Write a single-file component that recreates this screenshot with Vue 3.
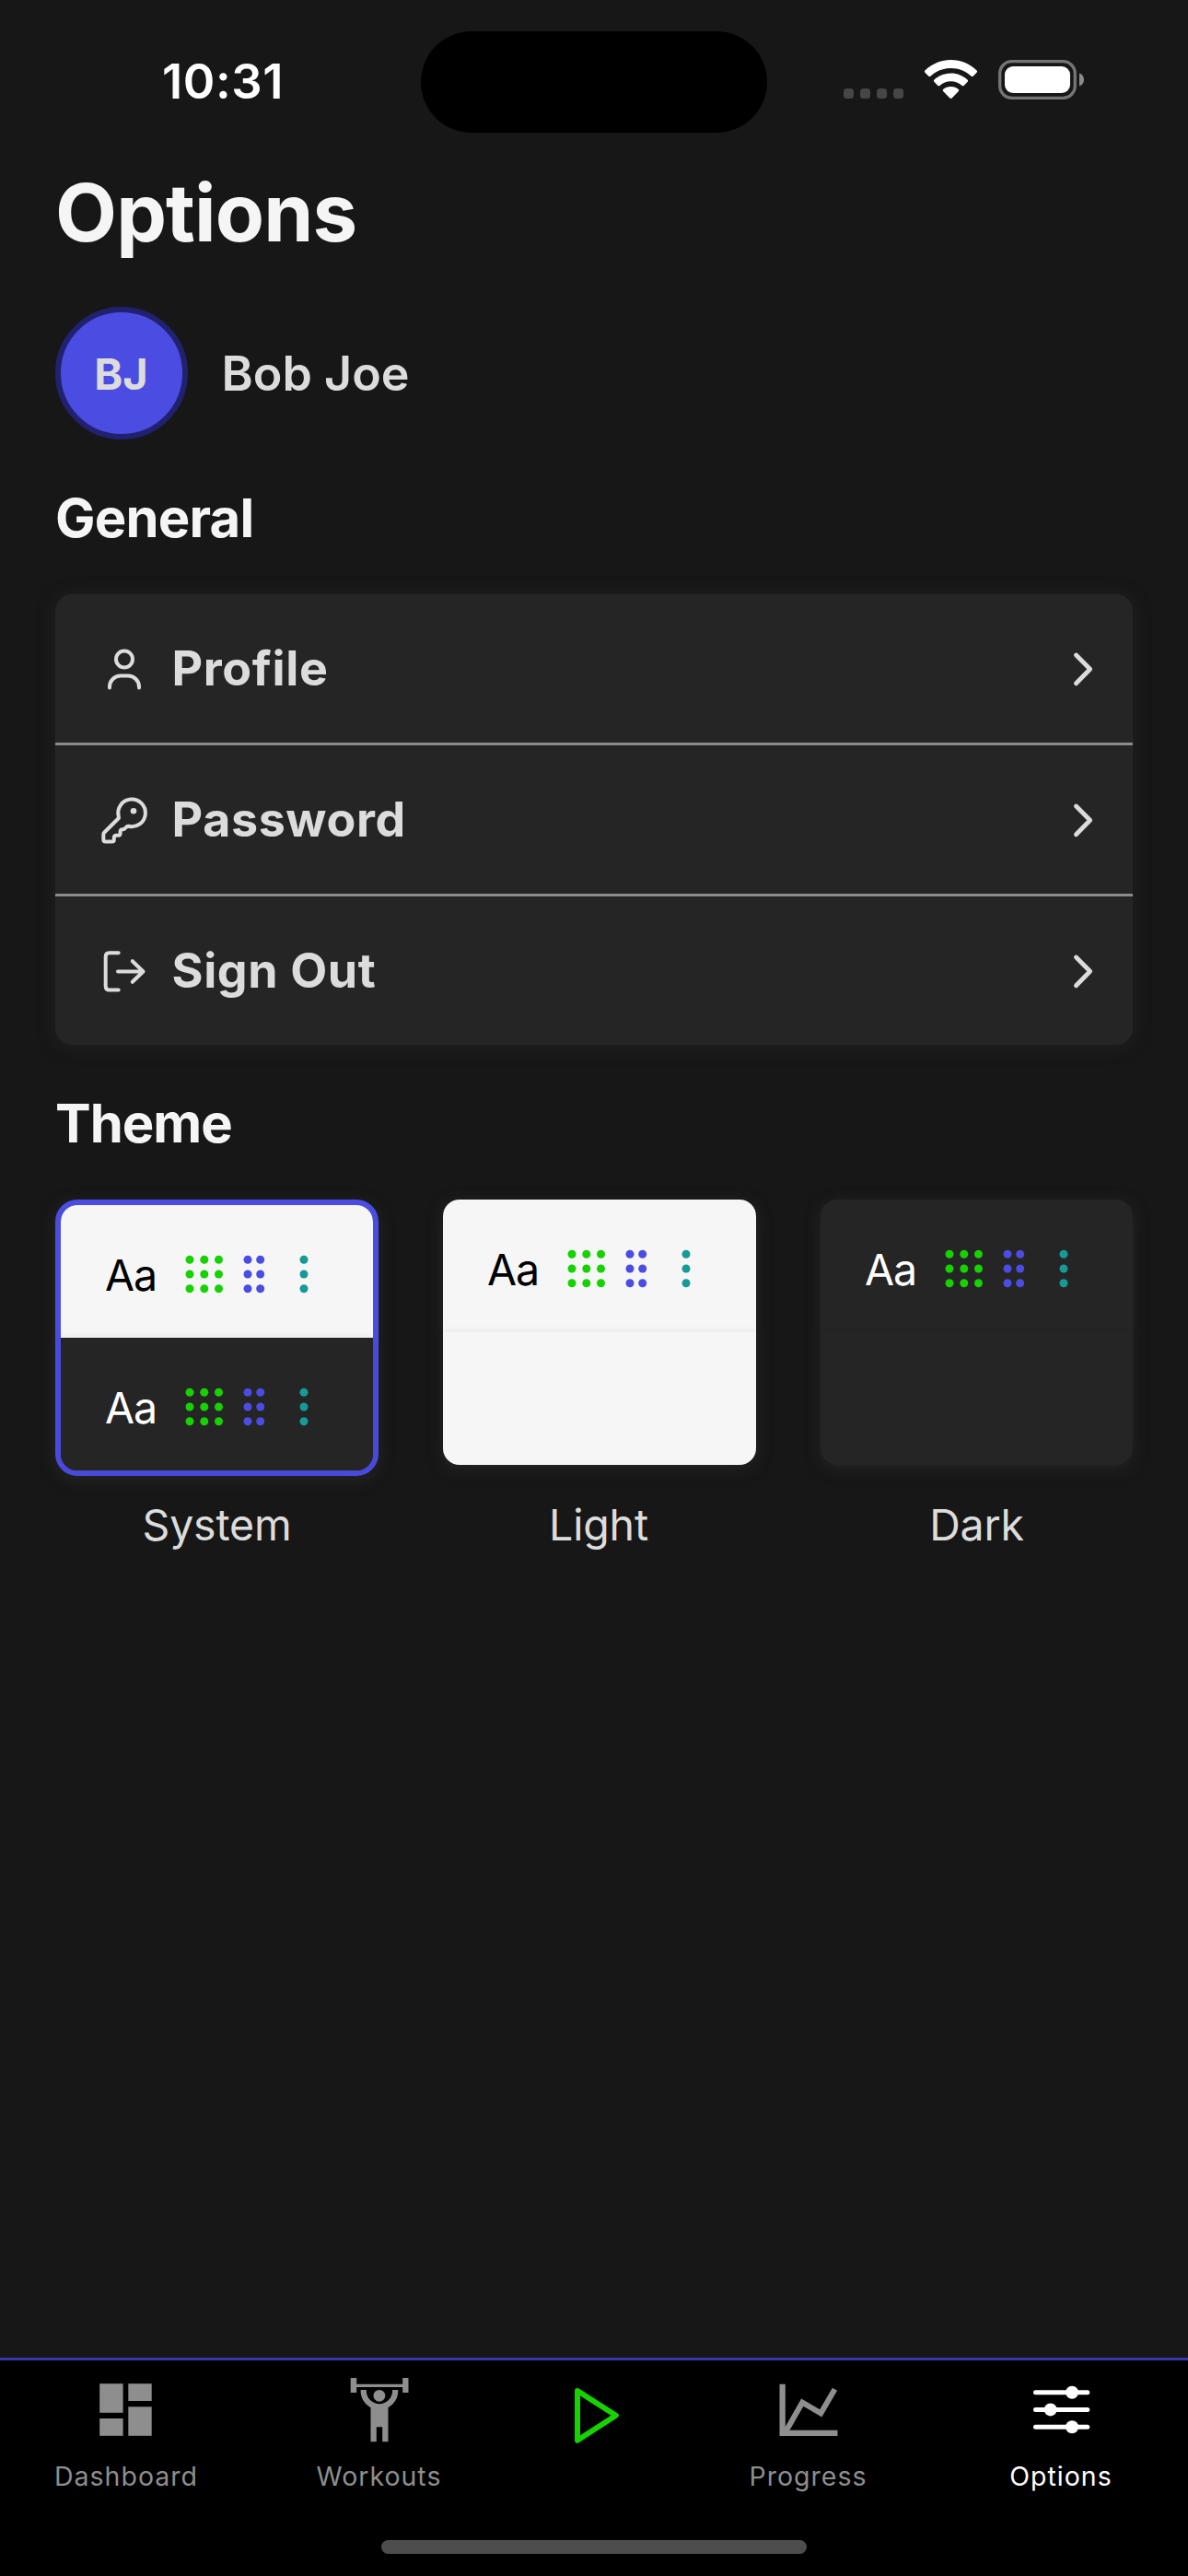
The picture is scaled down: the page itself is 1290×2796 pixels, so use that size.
<script setup>
const rows = [
  { id: 'profile', label: 'Profile' },
  { id: 'password', label: 'Password' },
  { id: 'signout', label: 'Sign Out' },
]

const themes = [
  { id: 'system', label: 'System', halves: [{ tone: 'light', sample: true }, { tone: 'dark', sample: true }] },
  { id: 'light', label: 'Light', halves: [{ tone: 'light', sample: true }, { tone: 'light', sample: false }] },
  { id: 'dark', label: 'Dark', halves: [{ tone: 'dark', sample: true }, { tone: 'dark', sample: false }] },
]

const dotRows = [5.2, 21, 36.7]
const dotCols = [
  { x: 6, tone: 'green' },
  { x: 21.8, tone: 'green' },
  { x: 37.5, tone: 'green' },
  { x: 69, tone: 'indigo' },
  { x: 82.7, tone: 'indigo' },
  { x: 130, tone: 'teal' },
]

const tabs = [
  { id: 'dashboard', label: 'Dashboard' },
  { id: 'workouts', label: 'Workouts' },
  { id: 'start', label: '' },
  { id: 'progress', label: 'Progress' },
  { id: 'options', label: 'Options' },
]
</script>

<template>
  <div class="screen">
    <header class="status">
      <div class="time">10:31</div>
      <div class="island"></div>
      <div class="indicators">
        <svg width="262" height="44" viewBox="0 0 262 44">
          <g fill="#464646">
            <rect x="0" y="32" width="11" height="11" rx="3.5" />
            <rect x="18" y="32" width="11" height="11" rx="3.5" />
            <rect x="36" y="32" width="11" height="11" rx="3.5" />
            <rect x="54" y="32" width="11" height="11" rx="3.5" />
          </g>
          <g fill="#fff">
            <path d="M116.500 1C127.500 1 137.500 5.400 144.600 12.500Q145.500 13.600 144.600 14.700L140.600 18.700Q139.600 19.500 138.600 18.700C132.800 13.200 125 9.900 116.500 9.900S100.200 13.200 94.400 18.700Q93.400 19.500 92.400 18.700L88.400 14.700Q87.500 13.600 88.400 12.500C95.500 5.400 105.500 1 116.500 1Z" />
            <path d="M116.500 15.600C123.500 15.600 129.900 18.300 134.700 22.700Q135.600 23.700 134.700 24.800L130.600 28.900Q129.600 29.800 128.600 28.900C125.400 26 121.200 24.300 116.500 24.300S107.600 26 104.400 28.900Q103.400 29.800 102.400 28.900L98.300 24.800Q97.400 23.700 98.300 22.700C103.100 18.300 109.500 15.600 116.500 15.600Z" />
            <path d="M116.500 30C119.700 30 122.700 31.200 124.900 33.100Q125.700 34.100 124.900 35.100L117.600 42.500Q116.500 43.400 115.400 42.500L108.100 35.100Q107.300 34.100 108.100 33.100C110.300 31.200 113.300 30 116.500 30Z" />
            <rect x="175" y="8" width="71" height="29" rx="9" />
          </g>
          <rect x="169.700" y="2.700" width="81.600" height="39.600" rx="13" fill="none" stroke="#757575" stroke-width="3.300" />
          <path d="M256 15.500C259 16.500 261 19 261 22.500S259 28.500 256 29.500Z" fill="#8b8b8b" />
        </svg>
      </div>
    </header>

    <main class="content">
      <h1>Options</h1>
      <div class="user">
        <div class="avatar"><span>BJ</span></div>
        <div class="name">Bob Joe</div>
      </div>

      <h2 class="general">General</h2>
      <div class="card">
        <div v-for="row in rows" :key="row.id" class="row">
          <svg class="row-icon" width="54" height="54" viewBox="0 0 54 54">
            <template v-if="row.id === 'profile'">
              <circle cx="27" cy="16.500" r="9" />
              <path d="M11 47.500V46.500A12 12 0 0 1 23 34.500H31A12 12 0 0 1 43 46.500V47.500" />
            </template>
            <template v-else-if="row.id === 'password'">
              <path d="M20.900 25L5.300 40.500Q4.300 41.500 4.300 43V48Q4.300 50.500 6.800 50.500H13.800Q15.800 50.500 15.800 48.500V46.200Q15.800 43.700 18.300 43.700H20.300Q22.600 43.700 22.600 41.400V39.800Q22.600 37.300 25.100 37.300Q26.600 37.300 27.400 36.400L29.800 34.200Q30.500 33.500 31.600 33.700A14.800 14.800 0 1 0 20.700 22.700Q21.100 24.200 20.900 25Z" />
              <circle class="solid" cx="37" cy="17.200" r="3.300" />
            </template>
            <template v-else>
              <path d="M20.700 7.200H10.700Q6.700 7.200 6.700 11.200V43.500Q6.700 47.500 10.700 47.500H20.700M20 27.500H47.500M35.800 16.200L47.500 27.500L35.800 38.800" />
            </template>
          </svg>
          <span class="row-label">{{ row.label }}</span>
          <svg class="chevron" width="24" height="40" viewBox="0 0 24 40">
            <path d="M4.500 5L19.700 20.300L4.500 35.700" />
          </svg>
        </div>
      </div>

      <h2 class="theme-title">Theme</h2>
      <div class="themes">
        <div v-for="theme in themes" :key="theme.id" class="theme">
          <div class="preview" :class="'preview-' + theme.id">
            <div v-for="(half, i) in theme.halves" :key="i" class="half" :class="half.tone">
              <template v-if="half.sample">
                <span class="aa">Aa</span>
                <svg width="136" height="42" viewBox="0 0 136 42">
                  <template v-for="col in dotCols" :key="col.x">
                    <circle v-for="y in dotRows" :key="y" :cx="col.x" :cy="y" r="4.500" :class="col.tone" />
                  </template>
                </svg>
              </template>
            </div>
          </div>
          <div class="theme-label">{{ theme.label }}</div>
        </div>
      </div>
    </main>

    <nav class="tabbar">
      <div class="tabs">
        <div v-for="tab in tabs" :key="tab.id" class="tab" :class="{ active: tab.id === 'options' }">
          <svg width="76" height="76" viewBox="0 0 76 76" fill="currentColor">
            <template v-if="tab.id === 'dashboard'">
              <rect x="9.200" y="9.200" width="25.400" height="31.600" />
              <rect x="40.300" y="9.200" width="25.400" height="18.800" />
              <rect x="40.300" y="34.300" width="25.400" height="31.500" />
              <rect x="9.200" y="47" width="25.400" height="18.800" />
            </template>
            <template v-else-if="tab.id === 'workouts'">
              <path d="M6.700 3H13.200V9.700H63.200V3H69.500V19H63.200V13H13.200V19H6.700Z" />
              <circle cx="37.900" cy="22.300" r="6.400" />
              <path d="M20.700 16V17A17.200 17.200 0 0 0 55.200 17V16" fill="none" stroke="currentColor" stroke-width="6.200" />
              <path d="M28.500 32H47.500V72.300H41.200V56.300H34.800V72.300H28.500Z" />
            </template>
            <path v-else-if="tab.id === 'start'" class="play" d="M20 17L61.800 43.700L20 70.800Z" />
            <template v-else-if="tab.id === 'progress'">
              <path d="M6.500 9.700H12.800V59.700H69.500V66H6.500Z" />
              <path d="M12.500 62.500L31.200 29.700L51.300 41.300L66.500 15.300" fill="none" stroke="currentColor" stroke-width="6" />
            </template>
            <template v-else>
              <path d="M10.500 18.700H66.800M10.500 37.400H66.800M10.500 56.200H66.800" fill="none" stroke="currentColor" stroke-width="5" stroke-linecap="round" />
              <circle cx="50.100" cy="18.700" r="7" />
              <circle cx="26.700" cy="37.400" r="7" />
              <circle cx="50.100" cy="56.200" r="7" />
            </template>
          </svg>
          <span class="tab-label">{{ tab.label }}</span>
        </div>
      </div>
      <div class="home"></div>
    </nav>
  </div>
</template>

<style>
body {
  background: #171717;
}
</style>

<style scoped>
.screen {
  display: flex;
  flex-direction: column;
  box-sizing: border-box;
  width: 1290px;
  height: 2796px;
  overflow: hidden;
  background: #171717;
  color: #dcdcdc;
  font-family: Inter, "Liberation Sans", sans-serif;
}
svg {
  display: block;
  flex: none;
}
.status {
  display: grid;
  grid-template-columns: 457px 376px 457px;
  align-items: center;
  height: 178px;
}
.time {
  padding: 0 0 2px 27px;
  text-align: center;
  color: #fff;
  font-size: 52.500px;
  font-weight: 600;
  line-height: 60px;
  letter-spacing: 0.600px;
}
.island {
  height: 110px;
  border-radius: 55px;
  background: #000;
}
.indicators {
  padding: 0 0 6px 83px;
}
.content {
  flex: 1;
  padding: 3px 60px 0;
}
h1,
h2 {
  margin: 0;
  color: #f5f5f5;
  font-weight: 700;
}
h1 {
  font-size: 87px;
  line-height: 100px;
  letter-spacing: -0.900px;
}
h2 {
  font-size: 58px;
  line-height: 70px;
  letter-spacing: -1px;
}
.user {
  display: flex;
  align-items: center;
  gap: 36px;
  margin-top: 52px;
}
.avatar {
  display: flex;
  align-items: center;
  justify-content: center;
  box-sizing: border-box;
  width: 144px;
  height: 144px;
  border: 6px solid #21226f;
  border-radius: 50%;
  background: #4b4ce2;
  font-size: 47px;
  font-weight: 700;
}
.avatar span {
  padding-right: 1px;
}
.name {
  padding-left: 0.500px;
  font-size: 52px;
  font-weight: 600;
}
.general {
  margin-top: 50px;
  letter-spacing: -0.800px;
}
.card {
  margin-top: 48px;
  border-radius: 18px;
  background: #252525;
  box-shadow: 0 2px 18px rgba(37, 37, 37, 0.75);
}
.row {
  display: flex;
  align-items: center;
  height: 161px;
  padding: 0 42px 0 48px;
}
.row + .row {
  border-top: 3px solid #8b8b8b;
}
.row-icon {
  fill: none;
  stroke: #dcdcdc;
  stroke-width: 4;
  stroke-linecap: round;
  stroke-linejoin: round;
}
.solid {
  fill: #dcdcdc;
  stroke: none;
}
.row-label {
  flex: 1;
  padding-left: 24.500px;
  font-size: 52px;
  font-weight: 700;
  letter-spacing: 0.600px;
}
.chevron path {
  fill: none;
  stroke: #dcdcdc;
  stroke-width: 4.800;
  stroke-linecap: round;
  stroke-linejoin: round;
}
.theme-title {
  margin-top: 50px;
}
.themes {
  display: flex;
  justify-content: space-between;
  height: 383px;
  margin-top: 48px;
}
.theme {
  display: flex;
  flex-direction: column;
  justify-content: space-between;
}
.preview {
  width: 339px;
  border-radius: 18px;
  box-shadow: 0 4px 16px rgba(42, 42, 42, 0.8);
}
.preview-light {
  width: 340px;
}
.preview-light + .theme-label {
  padding-right: 2px;
}
.preview-system {
  border: 6px solid #4b4ce2;
  border-radius: 24px;
}
.half {
  display: flex;
  align-items: center;
  box-sizing: border-box;
  height: 144px;
  padding: 6px 0 0 48px;
}
.half:first-child {
  border-radius: 18px 18px 0 0;
}
.half:last-child {
  border-radius: 0 0 18px 18px;
  box-shadow: 0 1px 10px rgba(37, 37, 37, 0.11);
}
.light {
  background: #f6f6f6;
  color: #000;
}
.dark {
  background: #252525;
  color: #fff;
}
.aa {
  width: 86px;
  padding-top: 2px;
  box-sizing: border-box;
  font-size: 46.500px;
  letter-spacing: -1px;
}
.green {
  fill: #17d100;
}
.indigo {
  fill: #4b4ce2;
}
.teal {
  fill: #179a96;
}
.theme-label {
  text-align: center;
  font-size: 46.500px;
  line-height: 60px;
  letter-spacing: -0.200px;
}
.tabbar {
  display: flex;
  flex-direction: column;
  justify-content: space-between;
  align-items: center;
  box-sizing: border-box;
  height: 237px;
  padding: 16px 0 24px;
  border-top: 3px solid #3836ac;
  background: #000;
}
.tabs {
  display: grid;
  grid-template-columns: 274px 275px 192px 273px 276px;
}
.tab {
  display: flex;
  flex-direction: column;
  align-items: center;
  gap: 16px;
  color: #8e8e8e;
}
.tab.active {
  color: #fff;
}
.tab-label {
  font-size: 28.500px;
  line-height: 36px;
  letter-spacing: 1px;
}
.play {
  fill: none;
  stroke: #17d100;
  stroke-width: 6;
  stroke-linejoin: round;
}
.home {
  width: 462px;
  height: 15px;
  border-radius: 8px;
  background: #4d4d4d;
}
</style>
